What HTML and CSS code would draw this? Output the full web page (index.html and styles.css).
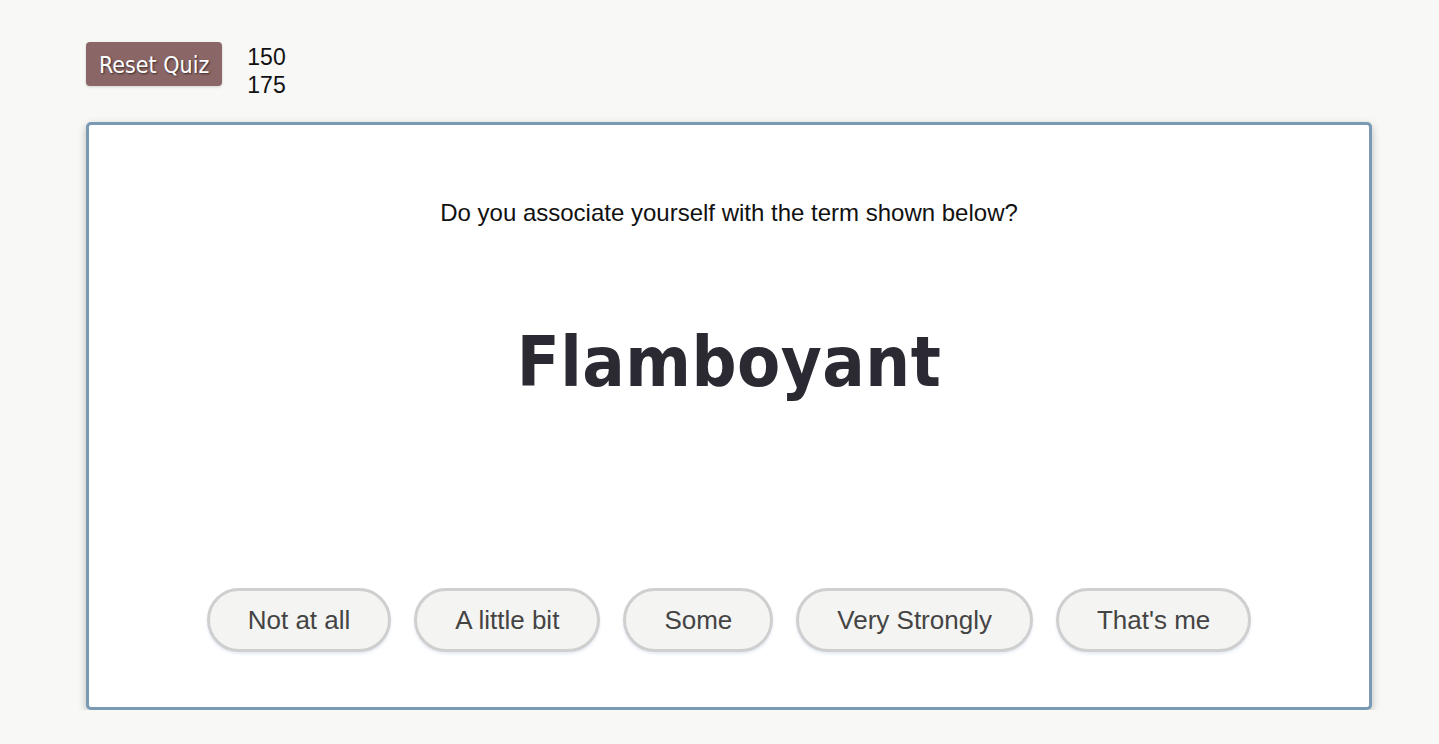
FILE: index.html
```html
<!DOCTYPE html>
<html lang="en">
<head>
    <meta charset="UTF-8">
    <meta name="viewport" content="width=device-width, initial-scale=1.0">
    <title>Quiz</title>
    <link rel="stylesheet" href="styles.css">
</head>
<body>
    <div id="page">
        <div id="top-bar">
            <button class="reset-btn">Reset Quiz</button>
            <div class="scores">
                <div>150</div>
                <div>175</div>
            </div>
        </div>

        <div id="quiz-card">
            <p class="question">Do you associate yourself with the term shown below?</p>
            <h1 class="term">Flamboyant</h1>
            <div class="answers">
                <button class="answer">Not at all</button>
                <button class="answer">A little bit</button>
                <button class="answer">Some</button>
                <button class="answer">Very Strongly</button>
                <button class="answer">That's me</button>
            </div>
        </div>
    </div>
</body>
</html>
```

FILE: styles.css
```css
body {
    background-color: #f8f8f6;
    font-family: "Liberation Sans", Arial, sans-serif;
    margin: 0;
    padding: 0;
}

#page {
    padding: 42px 67px 0 86px;
}

#top-bar {
    display: flex;
    align-items: flex-start;
    gap: 25px;
}

.reset-btn {
    background-color: #8b6666;
    color: #fff;
    border: none;
    border-radius: 4px;
    height: 44px;
    padding: 1px 13px 0;
    font-family: "DejaVu Sans Condensed", "DejaVu Sans", sans-serif;
    font-size: 23px;
    text-shadow: 1px 1px 2px rgba(0, 0, 0, 0.6);
    box-shadow: 0 1px 3px rgba(0, 0, 0, 0.15);
    cursor: pointer;
}

.scores {
    font-size: 23px;
    line-height: 28px;
    color: #111;
    margin-top: 1px;
}

#quiz-card {
    margin-top: 23px;
    height: 582px;
    background-color: #fff;
    border: 3px solid #7a9ab4;
    border-radius: 5px;
    box-shadow: 0 3px 8px rgba(0, 0, 0, 0.25);
    display: flex;
    flex-direction: column;
    align-items: center;
}

.question {
    margin: 74px 0 0;
    font-size: 24px;
    color: #111;
}

.term {
    margin: 100px 0 0;
    font-family: "DejaVu Sans Condensed", "DejaVu Sans", sans-serif;
    font-size: 70px;
    font-weight: bold;
    letter-spacing: 0.5px;
    color: #2b2a33;
    line-height: 1;
}

.answers {
    margin-top: auto;
    margin-bottom: 55px;
    display: flex;
    gap: 23px;
}

.answer {
    height: 64px;
    padding: 0 38px;
    background-color: #f4f4f2;
    border: 3px solid #cfcfcf;
    border-radius: 32px;
    color: #444;
    font-family: "Liberation Sans", Arial, sans-serif;
    font-size: 26px;
    box-shadow: 0 2px 3px rgba(120, 150, 200, 0.2);
    cursor: pointer;
}
```
